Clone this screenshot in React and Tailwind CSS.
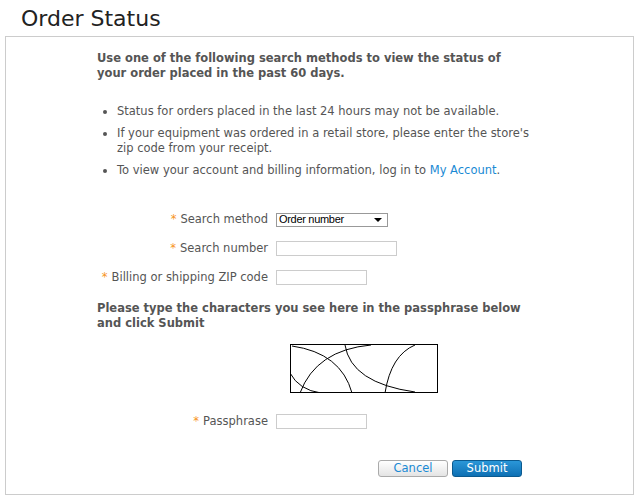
export default function App() {
  return (
    <div className="w-[639px] h-[500px] bg-white text-[11.5px] text-[#555] font-['DejaVu_Sans',Verdana,sans-serif]">
      <h1 className="pl-[21px] pt-[6px] h-[36px] text-[22px] leading-[26px] text-[#222]">Order Status</h1>
      <div className="mx-[5px] h-[459px] border border-[#ccc] pl-[91px] pt-[14px]">
        <p className="w-[430px] font-bold leading-[15px]">
          Use one of the following search methods to view the status of your order placed in the past 60 days.
        </p>
        <ul className="mt-[23px] pl-[20px] list-disc w-[440px] leading-[15px] flex flex-col gap-[7px]">
          <li>Status for orders placed in the last 24 hours may not be available.</li>
          <li>If your equipment was ordered in a retail store, please enter the store's zip code from your receipt.</li>
          <li>
            To view your account and billing information, log in to <a className="text-[#1a8ad4]">My Account</a>.
          </li>
        </ul>

        <div className="mt-[34px] grid grid-cols-[171px_auto] gap-x-[8px] gap-y-[14px] items-center">
          <Label>Search method</Label>
          <div className="w-[112px] h-[14px] border border-[#999] flex items-center justify-between px-[2px] text-black text-[11px] font-['Liberation_Sans',Arial,sans-serif]">
            <span className="tracking-[-0.3px]">Order number</span>
            <span className="border-x-[4px] border-x-transparent border-t-[4px] border-t-black mr-[3px]" />
          </div>
          <Label>Search number</Label>
          <div className="w-[121px] h-[15px] border border-[#ccc]" />
          <Label>Billing or shipping ZIP code</Label>
          <div className="w-[91px] h-[15px] border border-[#ccc]" />
        </div>

        <p className="mt-[16px] w-[430px] font-bold leading-[15px]">
          Please type the characters you see here in the passphrase below and click Submit
        </p>

        <div className="mt-[13px] ml-[193px] w-[148px] h-[49px] border border-black overflow-hidden">
          <svg width="146" height="47" viewBox="0 0 146 47" fill="none" stroke="#000" strokeWidth="1">
            <path d="M1 1 Q50 8 61 48" />
            <path d="M9 48 Q25 5 80 0" />
            <path d="M54 0 Q60 38 124 47" />
            <path d="M94 48 Q100 10 124 0" />
            <path d="M-1 28 Q8 45 30 48" />
          </svg>
        </div>

        <div className="mt-[21px] grid grid-cols-[171px_auto] gap-x-[8px] items-center">
          <Label>Passphrase</Label>
          <div className="w-[91px] h-[15px] border border-[#ccc]" />
        </div>

        <div className="mt-[31px] ml-[281px] flex gap-[4px]">
          <button className="w-[70px] h-[17px] rounded-[3px] border border-[#aaa] bg-gradient-to-b from-white to-[#e4e4e4] text-[#1a8ad4] text-[11.5px] leading-[15px]">
            Cancel
          </button>
          <button className="w-[70px] h-[17px] rounded-[3px] border border-[#0b5a8f] bg-gradient-to-b from-[#2a97d8] to-[#0d70b4] text-white text-[11.5px] leading-[15px]">
            Submit
          </button>
        </div>
      </div>
    </div>
  );
}

function Label({ children }) {
  return (
    <div className="text-right whitespace-nowrap leading-[15px]">
      <span className="text-[#f7941d] mr-[4px]">*</span>
      {children}
    </div>
  );
}
